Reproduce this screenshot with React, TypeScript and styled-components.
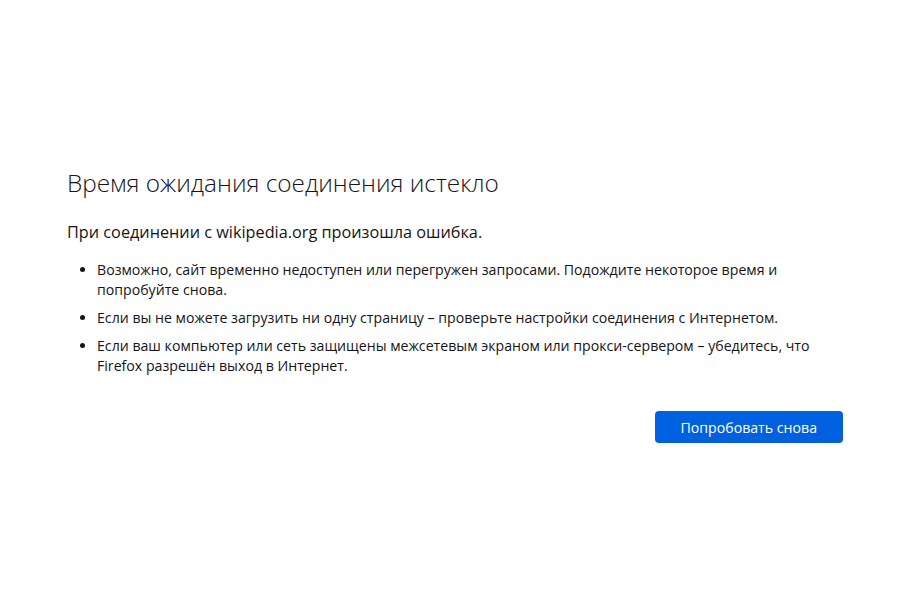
import React from 'react'
import styled, { createGlobalStyle } from 'styled-components'

const GlobalStyle = createGlobalStyle`
  html, body {
    margin: 0;
    padding: 0;
    background: #ffffff;
  }
  body {
    font-family: "Open Sans", "Noto Sans", sans-serif;
    color: #15141a;
  }
`

const Page = styled.div`
  width: 900px;
  height: 600px;
  box-sizing: border-box;
  padding: 167px 57px 0 67px;
`

const Container = styled.div`
  width: 776px;
`

const Title = styled.h1`
  margin: 0 0 21px;
  font-size: 24.35px;
  font-weight: 300;
  line-height: 32px;
  color: #15141a;
`

const Intro = styled.p`
  margin: 0 0 16px;
  font-size: 16.25px;
  line-height: 24px;
`

const List = styled.ul`
  margin: 0;
  padding: 0 0 0 30px;
  font-size: 14.15px;
  line-height: 20px;
`

const Item = styled.li`
  margin-bottom: 8px;
`

const ButtonRow = styled.div`
  display: flex;
  justify-content: flex-end;
  margin-top: 35px;
`

const Button = styled.button`
  height: 32px;
  padding: 0 26px;
  border: 0;
  border-radius: 4px;
  background: #0061e0;
  color: #ffffff;
  font-family: inherit;
  font-size: 14.15px;
  cursor: pointer;
`

const App: React.FC = () => {
  return (
    <Page>
      <GlobalStyle />
      <Container>
        <Title>Время ожидания соединения истекло</Title>
        <Intro>При соединении с wikipedia.org произошла ошибка.</Intro>
        <List>
          <Item>Возможно, сайт временно недоступен или перегружен запросами. Подождите некоторое время и попробуйте снова.</Item>
          <Item>Если вы не можете загрузить ни одну страницу – проверьте настройки соединения с Интернетом.</Item>
          <Item>Если ваш компьютер или сеть защищены межсетевым экраном или прокси-сервером – убедитесь, что Firefox разрешён выход в Интернет.</Item>
        </List>
        <ButtonRow>
          <Button>Попробовать снова</Button>
        </ButtonRow>
      </Container>
    </Page>
  )
}

export default App
